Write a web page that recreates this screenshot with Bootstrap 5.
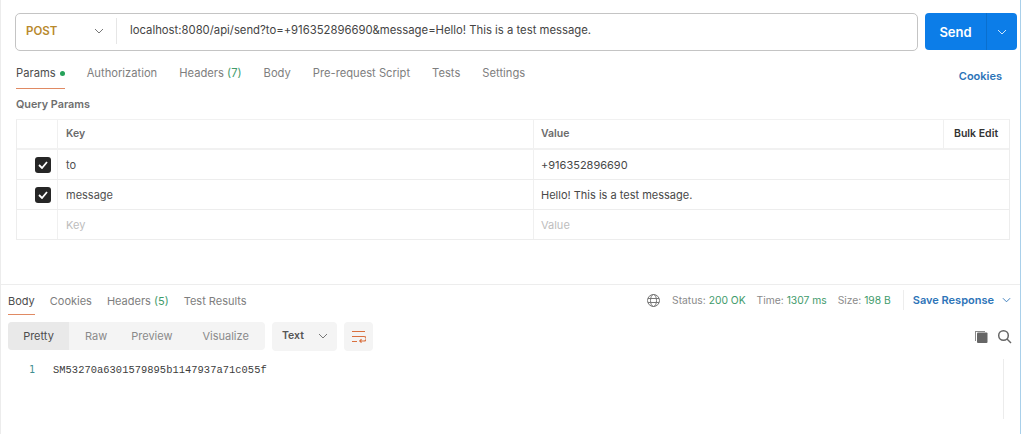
<!DOCTYPE html>
<html lang="en"><head><meta charset="utf-8"><title>Postman</title>
<link href="https://cdn.jsdelivr.net/npm/bootstrap@5.3.0/dist/css/bootstrap.min.css" rel="stylesheet">
<style>
html,body{height:434px;overflow:hidden;background:#fff}
body{font-family:Inter,"Liberation Sans",sans-serif;font-size:11px;color:#505050;line-height:14px}
.shell{width:1021px;height:434px;border-left:1px solid #ececec;border-right:1px solid #a9d0ea}
.req-top{height:285px;padding:13px 3px 0 14px;border-bottom:1px solid #ededed}
.url-row{height:38px}
.url-box{width:904px;border:1px solid #c4c4c4;border-radius:5px;height:38px}
.meth{width:101px;height:26px;padding:0 12px 0 10px;border-right:1px solid #e6e6e6;font-weight:600;color:#b8892d;font-size:11.5px;margin-top:-2px}
.url-text{padding-left:13px;color:#444;font-size:11.3px;margin-top:-4px}
.send-btn{width:92px;height:37px;margin-left:7px;background:#0c7de8;border-radius:4px;color:#fff;font-weight:600;font-size:13px}
.send-main{width:61px}
.send-caret{width:31px;height:37px;border-left:1px solid #0a6fce}
.tab-row{height:36px;padding:0 15px 0 1px;margin-top:2px}
.tab-item{color:#7e7e7e;font-size:11.2px;padding:13px 0 8px;margin-right:22px;height:36px;white-space:nowrap}
.tab-on{color:#4d4d4d;border-bottom:1px solid #e08a63}
.grn{color:#3f9b6b}
.dotg{display:inline-block;width:5px;height:5px;border-radius:50%;background:#25a25a;margin-left:4px;vertical-align:1px}
.cook{color:#2d74b8;font-weight:600;font-size:11px}
.qp{font-weight:600;color:#6e6e6e;font-size:10.8px;margin:9px 0 7px 1px}
.pgrid{width:994px;margin-left:1px;border:1px solid #ededed;border-top-color:#f1f1f1}
.prow{height:30px;border-bottom:1px solid #ededed}
.prow:last-child{border-bottom:0;height:29px}
.phead{height:30px;border-bottom-width:2px;border-bottom-color:#f1f1f1}
.c1{width:41px;border-right:1px solid #f0f0f0;height:100%;padding-right:6px}
.c2{width:476px;padding-left:8px;border-right:1px solid #f0f0f0;height:100%}
.c3{flex:1;padding-left:7px;height:100%;color:#484848}
.c4{width:66px;border-left:1px solid #f0f0f0;height:100%;font-weight:600;color:#333;font-size:10.5px;padding-left:10px}
.hd{font-weight:600;color:#6b6b6b;font-size:10.5px}
.ph{color:#bdbdbd}
.cbx{width:16px;height:16px;background:#262626;border-radius:3px}
.resp-top{height:30px;padding:0 9px 0 7px}
.rt{color:#7e7e7e;font-size:11px;padding:9px 0 7px;margin-right:15px;height:30px}
.rt-on{color:#4d4d4d;border-bottom:1px solid #e08a63}
.st{font-size:10.3px;color:#8a8a8a;margin-right:11px;white-space:nowrap}
.save{color:#2d74b8;font-weight:600;font-size:11px;padding-left:9px;margin-left:1px;border-left:1px solid #ededed;height:20px;white-space:nowrap}
.resp-bar{height:30px;padding:0 8px 0 7px;margin-top:6px}
.seg{width:257px;height:28px;background:#f4f4f4;border-radius:4px;color:#8a8a8a;font-size:11px}
.seg-on{width:61px;height:28px;background:#e9e9e9;border-radius:4px 0 0 4px;color:#4d4d4d}
.sel-txt{width:65px;height:29px;background:#f4f4f4;border-radius:4px;margin-left:7px;font-weight:600;color:#555;font-size:10.5px;padding:0 9px 0 10px}
.wrapb{width:29px;height:29px;background:#f4f4f4;border-radius:4px;margin-left:7px}
.code-wrap{padding:0 0 0 7px;margin-top:11px;height:64px}
.ln{width:27px;text-align:right;color:#3f8f92;font-family:"DejaVu Sans Mono",monospace;font-size:10px;padding-top:1px}
.cd{font-family:"Liberation Mono",monospace;font-size:10.4px;color:#3c3c3c;margin-left:18px;padding-top:1px;letter-spacing:.05px}
.scrl{width:14px;height:60px;margin-top:-3px;margin-right:3px;border-left:1px solid #ececec}
</style></head><body>
<div class="shell">
 <div class="req-top">
  <div class="url-row d-flex">
   <div class="url-box d-flex align-items-center">
    <div class="meth d-flex align-items-center justify-content-between"><span>POST</span>
     <svg width="10" height="6" viewBox="0 0 10 6"><path d="M1 1l4 4 4-4" fill="none" stroke="#777" stroke-width="1"/></svg></div>
    <div class="url-text">localhost:8080/api/send?to=+916352896690&amp;message=Hello! This is a test message.</div>
   </div>
   <div class="send-btn d-flex align-items-center">
    <div class="send-main text-center">Send</div>
    <div class="send-caret d-flex align-items-center justify-content-center"><svg width="10" height="6" viewBox="0 0 10 6"><path d="M1 1l4 4 4-4" fill="none" stroke="#cfe6fb" stroke-width="1"/></svg></div>
   </div>
  </div>
  <div class="tab-row d-flex">
   <div class="tab-item tab-on">Params<span class="dotg"></span></div>
   <div class="tab-item">Authorization</div>
   <div class="tab-item">Headers <span class="grn">(7)</span></div>
   <div class="tab-item">Body</div>
   <div class="tab-item">Pre-request Script</div>
   <div class="tab-item">Tests</div>
   <div class="tab-item">Settings</div>
   <div class="cook ms-auto pt-3 mt-n1">Cookies</div>
  </div>
  <div class="qp">Query Params</div>
  <div class="pgrid">
   <div class="prow phead d-flex align-items-center"><div class="c1"></div><div class="c2 hd d-flex align-items-center">Key</div><div class="c3 hd d-flex align-items-center">Value</div><div class="c4 d-flex align-items-center">Bulk Edit</div></div>
   <div class="prow d-flex align-items-center"><div class="c1 d-flex align-items-center justify-content-end"><div class="cbx d-flex align-items-center justify-content-center"><svg width="10" height="8" viewBox="0 0 10 8"><path d="M1 4l3 3 5-6" fill="none" stroke="#fff" stroke-width="1.8"/></svg></div></div><div class="c2 d-flex align-items-center">to</div><div class="c3 d-flex align-items-center">+916352896690</div></div>
   <div class="prow d-flex align-items-center"><div class="c1 d-flex align-items-center justify-content-end"><div class="cbx d-flex align-items-center justify-content-center"><svg width="10" height="8" viewBox="0 0 10 8"><path d="M1 4l3 3 5-6" fill="none" stroke="#fff" stroke-width="1.8"/></svg></div></div><div class="c2 d-flex align-items-center">message</div><div class="c3 d-flex align-items-center">Hello! This is a test message.</div></div>
   <div class="prow d-flex align-items-center"><div class="c1"></div><div class="c2 ph d-flex align-items-center">Key</div><div class="c3 ph d-flex align-items-center">Value</div></div>
  </div>
 </div>
 <div class="resp-top d-flex align-items-center">
  <div class="rt rt-on">Body</div><div class="rt">Cookies</div><div class="rt">Headers <span class="grn">(5)</span></div><div class="rt">Test Results</div>
  <svg class="ms-auto" style="margin-right:11px" width="15" height="15" viewBox="0 0 15 15" fill="none" stroke="#777"><circle cx="7.5" cy="7.5" r="6"/><ellipse cx="7.5" cy="7.5" rx="3" ry="6"/><path d="M2 5.5h11M2 9.5h11"/></svg>
  <div class="st">Status: <span class="grn">200 OK</span></div>
  <div class="st">Time: <span class="grn">1307 ms</span></div>
  <div class="st">Size: <span class="grn">198 B</span></div>
  <div class="save d-flex align-items-center gap-2">Save Response <svg width="9" height="6" viewBox="0 0 10 6"><path d="M1 1l4 4 4-4" fill="none" stroke="#2d74b8"/></svg></div>
 </div>
 <div class="resp-bar d-flex align-items-center">
  <div class="seg d-flex align-items-center">
   <div class="seg-on d-flex align-items-center justify-content-center">Pretty</div>
   <div class="ms-3">Raw</div><div class="ms-4">Preview</div><div style="margin-left:30px">Visualize</div>
  </div>
  <div class="sel-txt d-flex align-items-center justify-content-between">Text <svg width="10" height="6" viewBox="0 0 10 6"><path d="M1 1l4 4 4-4" fill="none" stroke="#777"/></svg></div>
  <div class="wrapb d-flex align-items-center justify-content-center"><svg width="15" height="13" viewBox="0 0 15 13" fill="none" stroke="#d9703f" stroke-width="1.2"><path d="M1 1.5h13M1 6.5h12a2 2 0 0 1 0 4.5H9M10.5 9.2L8.8 11l1.7 1.6M1 11.5h5"/></svg></div>
  <svg class="ms-auto" width="15" height="15" viewBox="0 0 15 15"><path d="M1 2h10v1H2v9H1z" fill="#8a8a8a"/><rect x="3" y="3.500" width="10.500" height="10.500" rx="1" fill="#666"/></svg>
  <svg class="ms-2" width="15" height="15" viewBox="0 0 15 15" fill="none" stroke="#666" stroke-width="1.500"><circle cx="6.500" cy="6.500" r="4.800"/><path d="M10 10l4 4"/></svg>
 </div>
 <div class="code-wrap d-flex">
  <div class="ln">1</div><div class="cd">SM53270a6301579895b1147937a71c055f</div>
  <div class="scrl ms-auto"></div>
 </div>
</div>
<script src="https://cdn.jsdelivr.net/npm/bootstrap@5.3.0/dist/js/bootstrap.bundle.min.js"></script>
</body></html>
